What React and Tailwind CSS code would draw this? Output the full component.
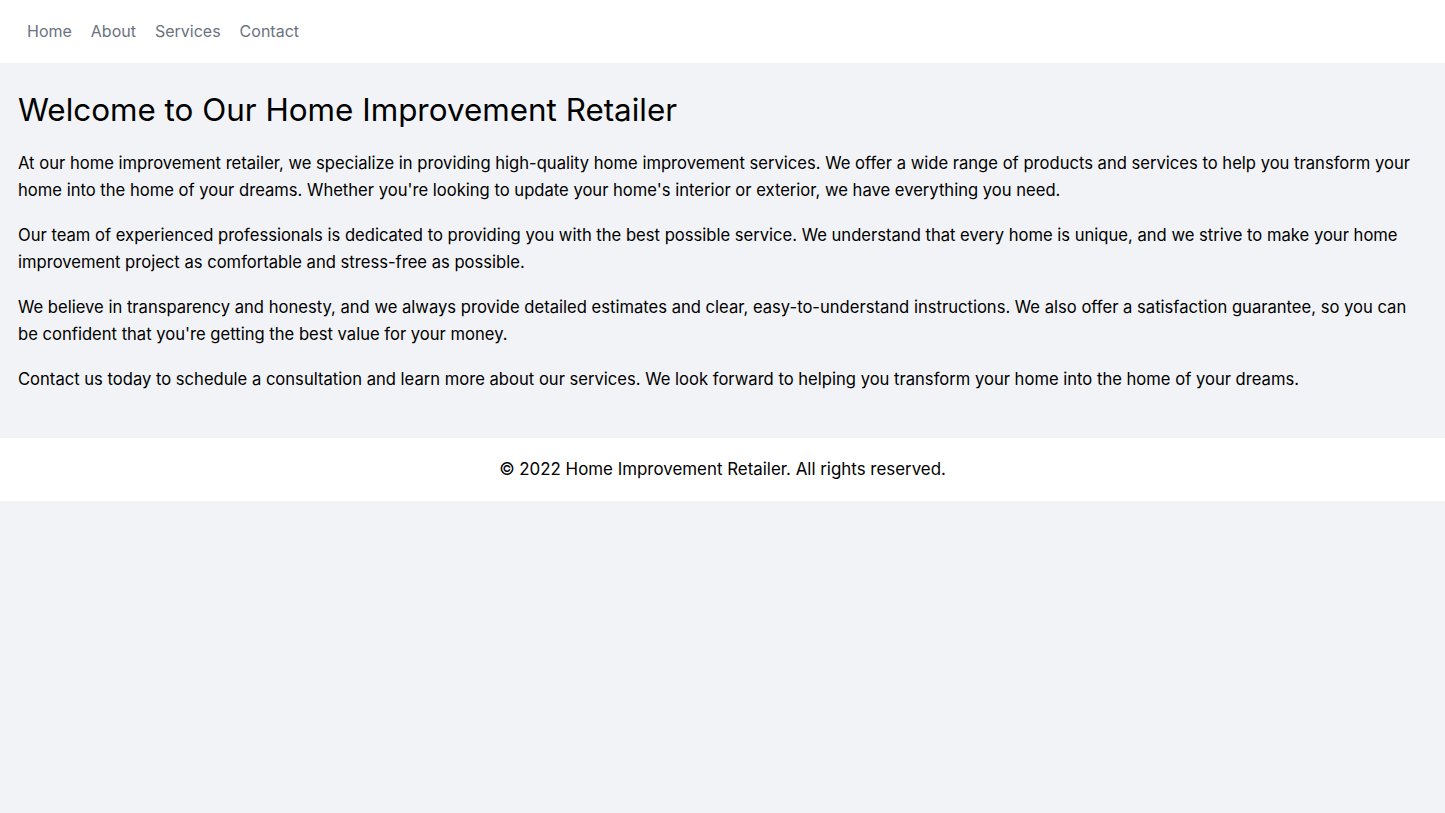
export default function App() {
  const paragraphs = [
    "At our home improvement retailer, we specialize in providing high-quality home improvement services. We offer a wide range of products and services to help you transform your home into the home of your dreams. Whether you're looking to update your home's interior or exterior, we have everything you need.",
    "Our team of experienced professionals is dedicated to providing you with the best possible service. We understand that every home is unique, and we strive to make your home improvement project as comfortable and stress-free as possible.",
    "We believe in transparency and honesty, and we always provide detailed estimates and clear, easy-to-understand instructions. We also offer a satisfaction guarantee, so you can be confident that you're getting the best value for your money.",
    "Contact us today to schedule a consultation and learn more about our services. We look forward to helping you transform your home into the home of your dreams.",
  ]

  return (
    <div className="min-h-[813px] bg-[#f2f3f6] font-['Inter',sans-serif] text-black">
      <nav className="h-[63px] bg-white flex items-center px-[27px]">
        <ul className="flex gap-[19px] text-[16px] text-[#6b7280] mb-[1px]">
          <li><a href="#">Home</a></li>
          <li><a href="#">About</a></li>
          <li><a href="#">Services</a></li>
          <li><a href="#">Contact</a></li>
        </ul>
      </nav>

      <main className="px-4 pt-[29px] pb-[27px]">
        <h1 className="text-[31.4px] leading-[36px] mb-[22px] pl-[2px]">Welcome to Our Home Improvement Retailer</h1>
        {paragraphs.map((p, i) => (
          <p key={i} className="text-[16.6px] leading-[27px] mb-[18px] pl-[2px]">{p}</p>
        ))}
      </main>

      <footer className="h-[63px] bg-white flex items-center justify-center text-[16.9px]">
        © 2022 Home Improvement Retailer. All rights reserved.
      </footer>
    </div>
  )
}
